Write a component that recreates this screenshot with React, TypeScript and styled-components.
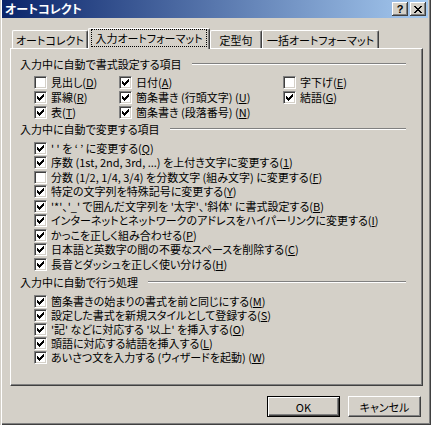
import React from "react";
import styled, { createGlobalStyle } from "styled-components";

const GlobalStyle = createGlobalStyle`
  html, body {
    margin: 0;
    padding: 0;
    background: #d4d0c8;
  }
  body {
    font-family: "Noto Sans CJK JP", "Liberation Sans", sans-serif;
    font-size: 11px;
    color: #000;
    font-feature-settings: "palt";
  }
`;

const Window = styled.div`
  width: 431px;
  height: 425px;
  box-sizing: border-box;
  padding: 0 3px 3px 2px;
  background: #d4d0c8;
  box-shadow: inset 1px 0 #d4d0c8, inset 2px 0 #fff, inset -1px -1px #404040,
    inset -2px -2px #808080;
  display: flex;
  flex-direction: column;
`;

const TitleBar = styled.div`
  height: 18px;
  display: flex;
  align-items: center;
  padding: 0 2px 0 3px;
  background: linear-gradient(to right, #0a246a, #a6caf0);
`;

const TitleText = styled.span`
  color: #fff;
  font-weight: bold;
  font-size: 12px;
  line-height: 12px;
`;

const CaptionButtons = styled.div`
  margin-left: auto;
  display: flex;
  gap: 2px;
`;

const CaptionButton = styled.div`
  width: 16px;
  height: 14px;
  box-sizing: border-box;
  background: #d4d0c8;
  box-shadow: inset -1px -1px #404040, inset 1px 1px #fff,
    inset -2px -2px #808080;
  display: flex;
  align-items: center;
  justify-content: center;
  font-family: "Liberation Sans", sans-serif;
  font-weight: bold;
  font-size: 11px;
  line-height: 11px;
`;

const Main = styled.div`
  display: flex;
  flex-direction: column;
  padding: 10px 5px 0 8px;
`;

const TabRow = styled.div`
  display: flex;
  align-items: flex-end;
  height: 20px;
  padding-left: 2px;
  position: relative;
  z-index: 1;
`;

const Tab = styled.div<{ $w: number; $active?: boolean }>`
  width: ${(p) => p.$w}px;
  height: ${(p) => (p.$active ? 21 : 18)}px;
  margin-bottom: ${(p) => (p.$active ? -1 : 0)}px;
  box-sizing: border-box;
  background: #d4d0c8;
  border-top: 1px solid #fff;
  border-left: 1px solid #fff;
  border-right: 1px solid #404040;
  border-radius: 2px 2px 0 0;
  box-shadow: inset -1px 0 #808080;
  display: flex;
  align-items: ${(p) => (p.$active ? "flex-start" : "center")};
  padding-top: ${(p) => (p.$active ? 1 : 0)}px;
  justify-content: center;
  white-space: nowrap;
  line-height: 14px;
`;

const FocusLabel = styled.span`
  outline: 1px dotted #000;
  outline-offset: 0;
  padding: 1px 3px;
`;

const Panel = styled.div`
  height: 338px;
  box-sizing: border-box;
  border-top: 1px solid #fff;
  border-left: 1px solid #fff;
  border-right: 1px solid #404040;
  border-bottom: 1px solid #404040;
  box-shadow: inset -1px -1px #808080;
  padding: 9px 16px 0 9px;
  display: flex;
  flex-direction: column;
`;

const GroupHeader = styled.div<{ $mt: number }>`
  display: flex;
  align-items: center;
  height: 12px;
  line-height: 12px;
  margin-top: ${(p) => p.$mt}px;
  white-space: nowrap;
`;

const Separator = styled.div`
  flex: 1;
  margin-left: 10px;
  border-top: 1px solid #808080;
  border-bottom: 1px solid #fff;
`;

const Grid = styled.div`
  display: grid;
  grid-template-columns: 85px 164px 1fr;
  grid-auto-rows: 15px;
  margin-top: 5px;
  padding-left: 14px;
`;

const List = styled.div<{ $mt: number; $step: number }>`
  display: grid;
  grid-auto-rows: ${(p) => p.$step}px;
  margin-top: ${(p) => p.$mt}px;
  padding-left: 14px;
`;

const Row = styled.label`
  display: flex;
  align-items: center;
  gap: 4px;
  white-space: nowrap;
  line-height: 13px;
  overflow: hidden;
`;

const Box = styled.span`
  flex: none;
  width: 13px;
  height: 13px;
  box-sizing: border-box;
  background: #fff;
  border-top: 1px solid #808080;
  border-left: 1px solid #808080;
  border-right: 1px solid #fff;
  border-bottom: 1px solid #fff;
  box-shadow: inset 1px 1px #404040, inset -1px -1px #d4d0c8;
  display: flex;
  align-items: center;
  justify-content: center;
`;

const Key = styled.u`
  text-underline-offset: 1px;
`;

const ButtonRow = styled.div`
  display: flex;
  justify-content: flex-end;
  gap: 8px;
  margin-top: 10px;
  padding-right: 2px;
`;

const Button = styled.div<{ $default?: boolean }>`
  width: 73px;
  height: 21px;
  box-sizing: border-box;
  display: flex;
  align-items: center;
  justify-content: center;
  line-height: 12px;
  background: #d4d0c8;
  border: 1px solid;
  border-color: ${(p) => (p.$default ? "#000" : "#fff #404040 #404040 #fff")};
  box-shadow: ${(p) =>
    p.$default
      ? "inset 1px 1px #fff, inset -1px -1px #404040, inset -2px -2px #808080"
      : "inset -1px -1px #808080"};
`;

const Check = () => (
  <svg width="7" height="7" viewBox="0 0 7 7" shapeRendering="crispEdges">
    <path
      d="M0 2h1v3H0zM1 3h1v3H1zM2 4h1v3H2zM3 3h1v3H3zM4 2h1v3H4zM5 1h1v3H5zM6 0h1v3H6z"
      fill="#000"
    />
  </svg>
);

const CloseGlyph = () => (
  <svg width="8" height="7" viewBox="0 0 8 7" shapeRendering="crispEdges">
    <path
      d="M0 0h2v1H0zM6 0h2v1H6zM1 1h2v1H1zM5 1h2v1H5zM2 2h4v1H2zM3 3h2v1H3zM2 4h4v1H2zM1 5h2v1H1zM5 5h2v1H5zM0 6h2v1H0zM6 6h2v1H6z"
      fill="#000"
    />
  </svg>
);

type Item = { text: string; key: string; checked: boolean };

const CheckItem: React.FC<{ item: Item }> = ({ item }) => (
  <Row>
    <Box>{item.checked && <Check />}</Box>
    <span>
      {item.text}(<Key>{item.key}</Key>)
    </span>
  </Row>
);

const formatItems: (Item | null)[] = [
  { text: "見出し", key: "D", checked: false },
  { text: "日付", key: "A", checked: true },
  { text: "字下げ", key: "E", checked: false },
  { text: "罫線", key: "R", checked: true },
  { text: "箇条書き (行頭文字) ", key: "U", checked: true },
  { text: "結語", key: "G", checked: true },
  { text: "表", key: "T", checked: true },
  { text: "箇条書き (段落番号) ", key: "N", checked: true },
  null,
];

const changeItems: Item[] = [
  { text: "' ' を ‘ ’ に変更する", key: "Q", checked: true },
  { text: "序数 (1st, 2nd, 3rd, ...) を上付き文字に変更する", key: "1", checked: true },
  { text: "分数 (1/2, 1/4, 3/4) を分数文字 (組み文字) に変更する", key: "F", checked: false },
  { text: "特定の文字列を特殊記号に変更する", key: "Y", checked: true },
  { text: "'*'、'_' で囲んだ文字列を '太字'、'斜体' に書式設定する", key: "B", checked: true },
  { text: "インターネットとネットワークのアドレスをハイパーリンクに変更する", key: "I", checked: true },
  { text: "かっこを正しく組み合わせる", key: "P", checked: true },
  { text: "日本語と英数字の間の不要なスペースを削除する", key: "C", checked: true },
  { text: "長音とダッシュを正しく使い分ける", key: "H", checked: true },
];

const actionItems: Item[] = [
  { text: "箇条書きの始まりの書式を前と同じにする", key: "M", checked: true },
  { text: "設定した書式を新規スタイルとして登録する", key: "S", checked: true },
  { text: "'記' などに対応する '以上' を挿入する", key: "O", checked: true },
  { text: "頭語に対応する結語を挿入する", key: "L", checked: true },
  { text: "あいさつ文を入力する (ウィザードを起動) ", key: "W", checked: true },
];

const App: React.FC = () => {
  return (
    <>
      <GlobalStyle />
      <Window>
        <TitleBar>
          <TitleText>オートコレクト</TitleText>
          <CaptionButtons>
            <CaptionButton>?</CaptionButton>
            <CaptionButton>
              <CloseGlyph />
            </CaptionButton>
          </CaptionButtons>
        </TitleBar>
        <Main>
          <TabRow>
            <Tab $w={76}>オートコレクト</Tab>
            <Tab $w={122} $active>
              <FocusLabel>入力オートフォーマット</FocusLabel>
            </Tab>
            <Tab $w={52}>定型句</Tab>
            <Tab $w={117}>一括オートフォーマット</Tab>
          </TabRow>
          <Panel>
            <GroupHeader $mt={0}>
              入力中に自動で書式設定する項目
              <Separator />
            </GroupHeader>
            <Grid>
              {formatItems.map((item, i) =>
                item ? <CheckItem key={i} item={item} /> : <span key={i} />
              )}
            </Grid>
            <GroupHeader $mt={3}>
              入力中に自動で変更する項目
              <Separator />
            </GroupHeader>
            <List $mt={6} $step={14.5}>
              {changeItems.map((item) => (
                <CheckItem key={item.key} item={item} />
              ))}
            </List>
            <GroupHeader $mt={4}>
              入力中に自動で行う処理
              <Separator />
            </GroupHeader>
            <List $mt={7} $step={14}>
              {actionItems.map((item) => (
                <CheckItem key={item.key} item={item} />
              ))}
            </List>
          </Panel>
          <ButtonRow>
            <Button $default>OK</Button>
            <Button>キャンセル</Button>
          </ButtonRow>
        </Main>
      </Window>
    </>
  );
};

export default App;
